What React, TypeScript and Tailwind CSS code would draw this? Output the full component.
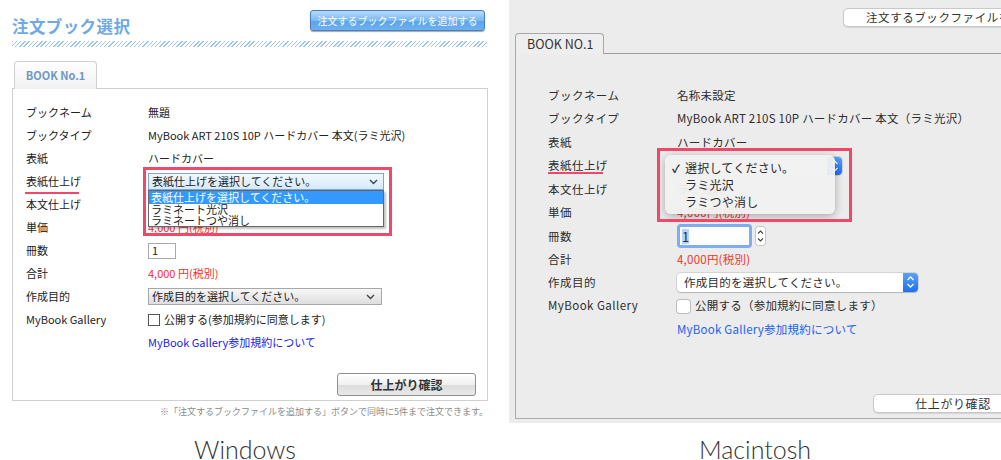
import React from "react";

const jp = "font-['Noto_Sans_CJK_JP',sans-serif]";

function WinChevron() {
  return (
    <svg width="9" height="6" viewBox="0 0 9 6" className="shrink-0">
      <polyline points="1,1 4.5,4.5 8,1" fill="none" stroke="#444" strokeWidth="1.4" />
    </svg>
  );
}

function WinRow({ label, children }: { label: React.ReactNode; children?: React.ReactNode }) {
  return (
    <div className="grid h-[23px] grid-cols-[122px_1fr] items-center">
      <div className="relative text-[11px] leading-none text-[#222]">{label}</div>
      <div className="relative text-[11px] leading-none text-[#222]">{children}</div>
    </div>
  );
}

function MacRow({ label, children }: { label: React.ReactNode; children?: React.ReactNode }) {
  return (
    <div className="grid h-[23.4px] grid-cols-[129px_1fr] items-center">
      <div className="relative text-[11.5px] leading-none tracking-[0.04em] text-[#2d2d2d]">{label}</div>
      <div className="relative text-[11.5px] leading-none tracking-[0.02em] text-[#2d2d2d]">{children}</div>
    </div>
  );
}

function WindowsPanel() {
  return (
    <div className="flex w-[490px] shrink-0 flex-col">
      <div className="h-[423px] pl-[12px] pr-[3px] pt-[10px]">
        {/* Header */}
        <div className="flex h-[24px] items-start justify-between">
          <h1 className="pt-[8px] text-[16.5px] font-bold leading-[16px] tracking-[0.4px] text-[#70a9e3]">
            注文ブック選択
          </h1>
          <button className="mr-[2px] h-[21px] w-[175px] rounded-[3px] border border-[#4a7fbf] bg-[linear-gradient(#b5d9fa,#7db9f2_50%,#5aa3ea_51%,#6fb0ef)] text-[10px] leading-none text-white shadow-[0_1px_1px_rgba(0,0,0,0.35)]">
            注文するブックファイルを追加する
          </button>
        </div>
        <div className="mt-[7px] h-[6px] w-[475px] bg-[repeating-linear-gradient(135deg,#9cc6ee_0px,#9cc6ee_1px,#ffffff_1px,#ffffff_3px)]" />

        {/* Tab */}
        <div className="relative z-10 ml-[2px] mt-[14px] flex h-[28px] w-[83px] items-center justify-center rounded-t-[4px] border border-b-0 border-[#d0d0d0] bg-[linear-gradient(#ffffff,#f1f1f1)] text-[11px] font-bold text-[#6f98c6]">
          BOOK No.1
        </div>

        {/* Panel */}
        <div className="-mt-px h-[313px] w-[476px] border border-[#cfcfcf] bg-white pl-[13px] pt-[12px]">
          <WinRow label="ブックネーム">無題</WinRow>
          <WinRow label="ブックタイプ">MyBook ART 210S 10P ハードカバー 本文(ラミ光沢)</WinRow>
          <WinRow label="表紙">ハードカバー</WinRow>
          <WinRow
            label={
              <>
                表紙仕上げ
                <span className="absolute left-[-1px] top-[16px] h-[2px] w-[54px] bg-[#f0486a]" />
              </>
            }
          >
            <div className="relative z-20 flex h-[17px] w-[236px] items-center justify-between border border-[#7fa6d3] bg-[linear-gradient(#f1f8fe,#d6eafb)] pl-[3px] pr-[5px]">
              <span>表紙仕上げを選択してください。</span>
              <WinChevron />
            </div>
            <div className="absolute left-0 top-[17px] z-20 w-[236px] border border-[#666] bg-white shadow-[2px_2px_2px_rgba(0,0,0,0.25)]">
              <div className="h-[13px] bg-[#3399ff] pl-[2px] leading-[13px] text-white">表紙仕上げを選択してください。</div>
              <div className="h-[11px] pl-[2px] leading-[11px]">ラミネート光沢</div>
              <div className="h-[11px] pl-[2px] leading-[11px]">ラミネートつや消し</div>
            </div>
            <div className="absolute left-[-5px] top-[-6px] z-30 h-[69px] w-[249px] border-[3px] border-[#ef4868]" />
          </WinRow>
          <WinRow label="本文仕上げ">ラミネート光沢</WinRow>
          <WinRow label="単価">
            <span className="text-[#ff2a2a]">4,000 円(税別)</span>
          </WinRow>
          <WinRow label="冊数">
            <div className="flex h-[16px] w-[28px] items-center border border-[#a9a9a9] pl-[3px]">1</div>
          </WinRow>
          <WinRow label="合計">
            <span className="text-[#ff2a2a]">4,000 円(税別)</span>
          </WinRow>
          <WinRow label="作成目的">
            <div className="flex h-[17px] w-[234px] items-center justify-between border border-[#a7a7a7] bg-[linear-gradient(#f7f7f7,#dedede)] pl-[3px] pr-[6px]">
              <span>作成目的を選択してください。</span>
              <WinChevron />
            </div>
          </WinRow>
          <WinRow label="MyBook Gallery">
            <div className="flex items-center gap-[4px]">
              <span className="h-[12px] w-[12px] border border-[#555] bg-white" />
              <span>公開する(参加規約に同意します)</span>
            </div>
          </WinRow>
          <WinRow label="">
            <span className="text-[#2020e8]">MyBook Gallery参加規約について</span>
          </WinRow>

          <button className="ml-[311px] mt-[19px] h-[23px] w-[139px] rounded-[3px] border border-[#8e8e8e] bg-[linear-gradient(#ffffff,#f0f0f0_50%,#dcdcdc_51%,#e9e9e9)] text-[12px] font-bold leading-none text-[#333]">
            仕上がり確認
          </button>
        </div>

        <p className="mt-[5px] w-[476px] text-right text-[9px] leading-[12px] text-[#8a8a8a]">
          ※「注文するブックファイルを追加する」ボタンで同時に5件まで注文できます。
        </p>
      </div>
      <div className="pt-[15px] text-center font-['Lato',sans-serif] text-[25px] font-light leading-[22px] text-[#333]">Windows</div>
    </div>
  );
}

function MacBlueArrows({ w }: { w: number }) {
  return (
    <svg width={w} height="18" viewBox="0 0 15 18">
      <polyline points="4.5,7 7.5,4 10.5,7" fill="none" stroke="#fff" strokeWidth="1.3" />
      <polyline points="4.5,11 7.5,14 10.5,11" fill="none" stroke="#fff" strokeWidth="1.3" />
    </svg>
  );
}

function MacPanel() {
  return (
    <div className="ml-[19px] flex w-[492px] shrink-0 flex-col">
      <div className="h-[423px] overflow-hidden bg-[#ececec] pt-[8px]">
        {/* Top button (cut off at the window edge) */}
        <div className="flex">
          <button className="ml-[334px] h-[19px] w-[230px] shrink-0 rounded-[5px] border border-[#c9c9c9] bg-white pl-[22px] text-left text-[11.5px] leading-none tracking-[0.05em] text-[#333] shadow-[0_1px_1px_rgba(0,0,0,0.1)]">
            注文するブックファイルを追加する
          </button>
        </div>

        {/* Tab row */}
        <div className="mt-[6px] flex h-[21px] items-end">
          <div className="ml-[6px] flex h-[21px] w-[89px] items-center rounded-t-[4px] border border-b-0 border-[#a8a8a8] bg-[#eeeeee] pl-[11px] text-[12.5px] leading-none text-[#333]">
            BOOK NO.1
          </div>
          <div className="flex-1 border-b border-[#9e9e9e]" />
        </div>

        {/* Panel */}
        <div className="ml-[6px] h-[365px] border-b border-l border-[#ababab] pl-[32px] pt-[30px]">
          <MacRow label="ブックネーム">名称未設定</MacRow>
          <MacRow label="ブックタイプ">MyBook ART 210S 10P ハードカバー 本文（ラミ光沢）</MacRow>
          <MacRow label="表紙">ハードカバー</MacRow>
          <MacRow
            label={
              <>
                表紙仕上げ
                <span className="absolute left-0 top-[12px] h-[2px] w-[55px] bg-[#f0486a]" />
              </>
            }
          >
            <div className="flex h-[18px] w-[165px] items-center justify-end rounded-[4px] bg-white shadow-[0_0_0_1px_rgba(0,0,0,0.12)]">
              <div className="h-[18px] w-[15px] rounded-r-[4px] bg-[linear-gradient(#5ba2fb,#1f6ff0)]">
                <MacBlueArrows w={15} />
              </div>
            </div>
            <div className="absolute left-[-12px] top-[-2px] z-20 h-[59px] w-[170px] rounded-[6px] bg-[#f1f1f1]/95 pt-[5px] shadow-[0_2px_8px_rgba(0,0,0,0.3)]">
              <div className="flex h-[17px] items-center text-[12px] text-[#2a2a2a]">
                <span className="w-[20px] pl-[7px] text-[11px] font-bold">✓</span>
                <span>選択してください。</span>
              </div>
              <div className="flex h-[17px] items-center pl-[20px] text-[12px] text-[#2a2a2a]">ラミ光沢</div>
              <div className="flex h-[17px] items-center pl-[20px] text-[12px] text-[#2a2a2a]">ラミつや消し</div>
            </div>
            <div className="absolute left-[-20px] top-[-9px] z-30 h-[74px] w-[195px] border-[3px] border-[#ef4868]" />
          </MacRow>
          <MacRow label="本文仕上げ">ラミ光沢</MacRow>
          <MacRow label="単価">
            <span className="text-[#f2352a]">4,000円(税別)</span>
          </MacRow>
          <MacRow label="冊数">
            <div className="flex items-center gap-[3px]">
              <div className="h-[24px] w-[75px] rounded-[4px] bg-[#80acf1] p-[3px]">
                <div className="flex h-full items-center bg-white pl-[2px] text-[13px]">
                  <span className="bg-[#b4d5fe] leading-[15px]">1</span>
                </div>
              </div>
              <svg width="11" height="20" viewBox="0 0 11 20">
                <rect x="0.5" y="0.5" width="10" height="19" rx="3" fill="#fff" stroke="#c4c4c4" />
                <polyline points="3,7.5 5.5,5 8,7.5" fill="none" stroke="#444" strokeWidth="1.1" />
                <polyline points="3,12.5 5.5,15 8,12.5" fill="none" stroke="#444" strokeWidth="1.1" />
              </svg>
            </div>
          </MacRow>
          <MacRow label="合計">
            <span className="text-[#f2352a]">4,000円(税別)</span>
          </MacRow>
          <MacRow label="作成目的">
            <div className="flex h-[19px] w-[241px] items-center justify-between rounded-[4px] bg-white pl-[7px] shadow-[0_0_0_1px_rgba(0,0,0,0.1),0_1px_1px_rgba(0,0,0,0.15)]">
              <span>作成目的を選択してください。</span>
              <div className="h-[19px] w-[15px] rounded-r-[4px] bg-[linear-gradient(#5ba2fb,#1f6ff0)]">
                <MacBlueArrows w={15} />
              </div>
            </div>
          </MacRow>
          <MacRow label="MyBook Gallery">
            <div className="flex items-center gap-[5px]">
              <span className="h-[13px] w-[13px] rounded-[3px] bg-white shadow-[0_0_0_1px_rgba(0,0,0,0.2)]" />
              <span>公開する（参加規約に同意します）</span>
            </div>
          </MacRow>
          <MacRow label="">
            <span className="text-[#2161f2]">MyBook Gallery参加規約について</span>
          </MacRow>

          <button className="ml-[325px] mt-[53px] h-[19px] w-[160px] rounded-[5px] border border-[#c9c9c9] bg-white text-[12px] leading-none tracking-[0.05em] text-[#333] shadow-[0_1px_1px_rgba(0,0,0,0.1)]">
            仕上がり確認
          </button>
        </div>
      </div>
      <div className="pt-[15px] text-center font-['Lato',sans-serif] text-[25px] font-light leading-[22px] text-[#333]">Macintosh</div>
    </div>
  );
}

export default function App() {
  return (
    <div className={`flex h-[460px] w-[1001px] overflow-hidden bg-white ${jp}`}>
      <WindowsPanel />
      <MacPanel />
    </div>
  );
}
